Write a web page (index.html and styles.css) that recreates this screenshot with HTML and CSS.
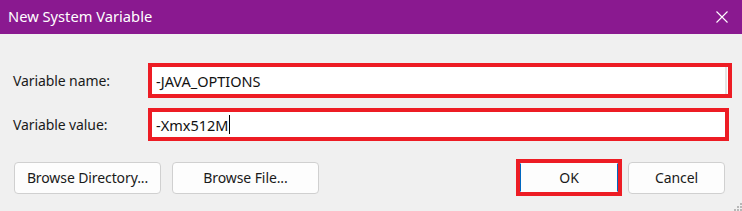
FILE: index.html
```html
<!DOCTYPE html>
<html lang="en">
<head>
<meta charset="utf-8">
<title>New System Variable</title>
<link rel="stylesheet" href="styles.css">
</head>
<body>
<div class="dialog">
  <div class="titlebar">
    <span class="title">New System Variable</span>
    <svg class="close" width="12" height="12" viewBox="0 0 12 12"><path d="M0.5 0.5 L11.5 11.5 M11.5 0.5 L0.5 11.5" stroke="#fff" stroke-width="1.1" fill="none"/></svg>
  </div>
  <div class="body">
    <div class="row row-name">
      <label class="label">Variable name:</label>
      <div class="field field-name"><span class="value">-JAVA_OPTIONS</span><span class="edge"></span></div>
    </div>
    <div class="row row-value">
      <label class="label">Variable value:</label>
      <div class="field field-value"><span class="value">-Xmx512M</span><span class="caret"></span></div>
    </div>
    <div class="buttons">
      <div class="btn btn-wide">Browse Directory...</div>
      <div class="btn btn-wide">Browse File...</div>
      <div class="spacer"></div>
      <div class="ok-mark"><div class="btn btn-ok">OK</div></div>
      <div class="btn btn-cancel">Cancel</div>
    </div>
  </div>
  <svg class="grip" width="8" height="8" viewBox="0 0 8 8">
    <rect x="6" y="0" width="2" height="2" fill="#b8b8b8"/>
    <rect x="3" y="3" width="2" height="2" fill="#b8b8b8"/>
    <rect x="6" y="3" width="2" height="2" fill="#b8b8b8"/>
    <rect x="0" y="6" width="2" height="2" fill="#b8b8b8"/>
    <rect x="3" y="6" width="2" height="2" fill="#b8b8b8"/>
    <rect x="6" y="6" width="2" height="2" fill="#b8b8b8"/>
  </svg>
</div>
</body>
</html>
```

FILE: styles.css
```css
* { box-sizing: border-box; }
html, body {
  margin: 0;
  padding: 0;
  background: #f0f0f0;
}
.dialog {
  position: relative;
  width: 742px;
  height: 211px;
  overflow: hidden;
  font-family: "Noto Sans", "Open Sans", sans-serif;
  color: #1a1a1a;
}
.titlebar {
  height: 34px;
  background: #8a1990;
  display: flex;
  align-items: center;
  justify-content: space-between;
  padding: 0 14px 0 8px;
}
.title {
  color: #fff;
  font-family: "Noto Sans", sans-serif;
  font-size: 14.7px;
  position: relative;
  top: -1px;
}
.close {
  display: block;
  margin-top: -1px;
}
.body {
  padding-top: 29px;
}
.row {
  display: flex;
  align-items: center;
  padding-left: 13px;
}
.row-name { height: 35px; padding-right: 10px; }
.row-value { height: 33px; margin-top: 10px; padding-right: 13px; }
.label {
  width: 135px;
  font-size: 14px;
  letter-spacing: -0.1px;
  color: #1a1a1a;
}
.field {
  flex: 1;
  height: 100%;
  border: 4px solid #ed1c24;
  background: #fff;
  display: flex;
  align-items: center;
  padding-left: 4px;
  position: relative;
}
.value {
  font-size: 14.5px;
  color: #111;
}
.edge {
  position: absolute;
  right: 1px;
  top: 0;
  bottom: 0;
  width: 2px;
  background: #e4e4e4;
}
.caret {
  width: 1px;
  height: 19px;
  background: #000;
  margin-left: 1px;
}
.buttons {
  display: flex;
  align-items: center;
  margin-top: 18px;
  padding-left: 14px;
  padding-right: 17px;
  height: 37px;
}
.btn {
  height: 32px;
  background: #fdfdfd;
  border: 1px solid #d0d0d0;
  border-radius: 4px;
  display: flex;
  align-items: center;
  justify-content: center;
  font-size: 14px;
  letter-spacing: -0.1px;
  color: #1a1a1a;
}
.btn-wide {
  width: 147px;
  margin-right: 11px;
}
.spacer { flex: 1; }
.ok-mark {
  border: 4px solid #ed1c24;
  width: 106px;
  height: 37px;
  margin-right: 6px;
  display: flex;
}
.btn-ok {
  width: 100%;
  height: 100%;
  border: 1px solid #0067c0;
  border-top-color: #fdfdfd;
  border-bottom-color: #fdfdfd;
  border-radius: 0;
}
.btn-cancel {
  width: 97px;
}
.grip {
  position: absolute;
  right: 0;
  bottom: 0;
}
```
